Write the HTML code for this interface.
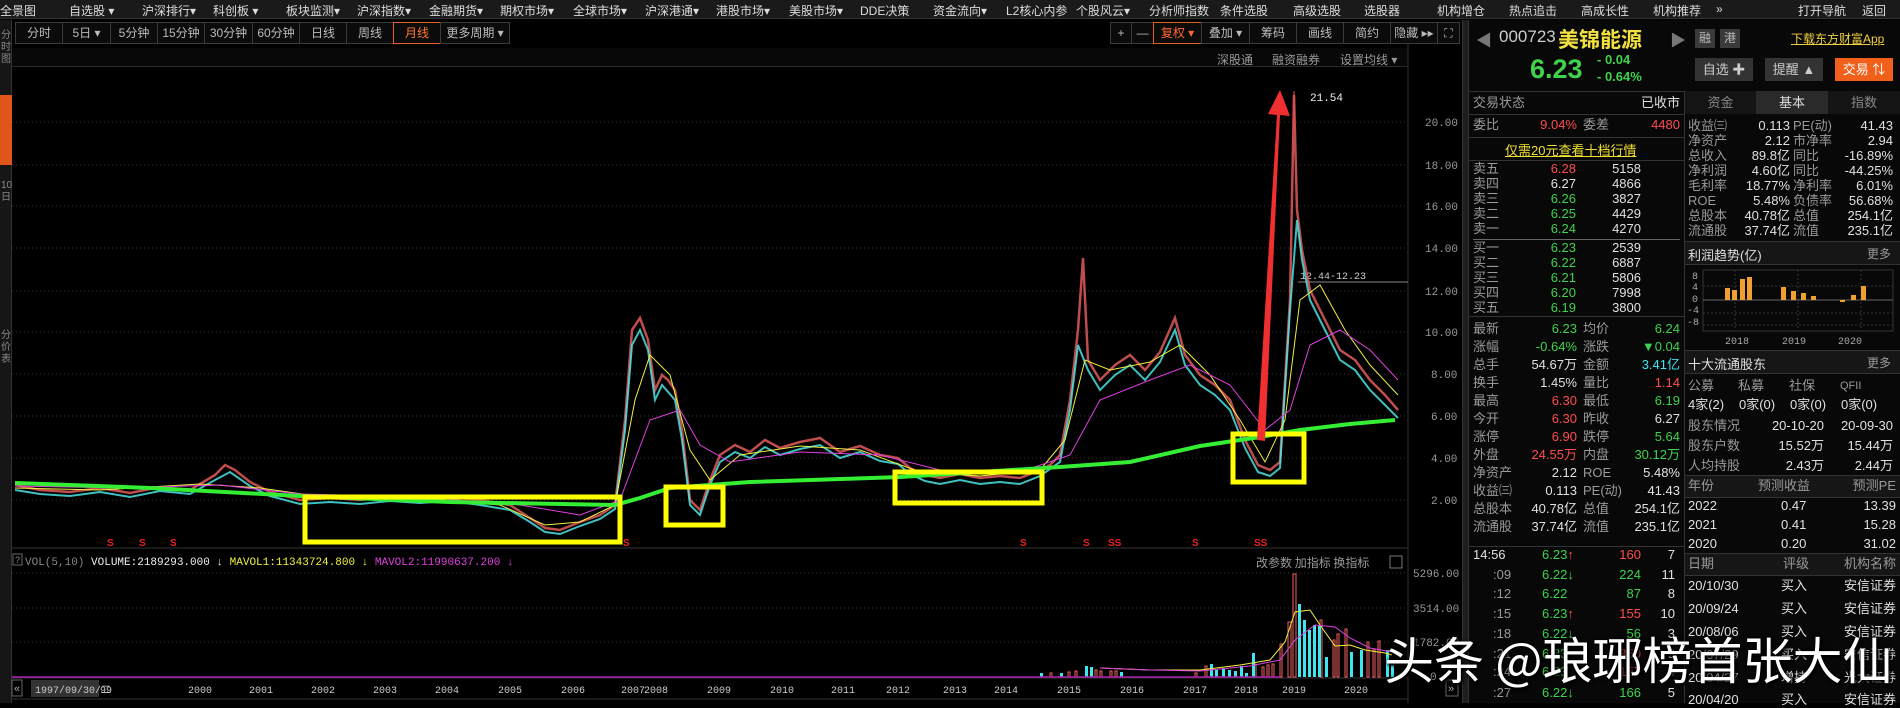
<!DOCTYPE html>
<html><head><meta charset="utf-8">
<style>
*{margin:0;padding:0;box-sizing:border-box}
body{width:1900px;height:703px;background:#000;overflow:hidden;position:relative;font-family:"Liberation Sans","Noto Sans CJK SC",sans-serif;font-size:12px;color:#ccc}
.a{position:absolute;white-space:nowrap}
#nav{left:0;top:0;width:1900px;height:19px;background:#1a1a1a;border-bottom:1px solid #333}
#nav span{position:absolute;top:2px;font-size:12px;color:#ddd}
.tab{position:absolute;top:22px;height:22px;border:1px solid #3a3a3a;background:#0b0b0b;color:#bbb;font-size:12px;line-height:20px;text-align:center}
.row{position:absolute;height:16px;font-size:13px;line-height:16px}
.row span{position:absolute;top:0}
.g{color:#3fd24c}.r{color:#ff4d4d}.w{color:#e0e0e0}.l{color:#9a9a9a}.y{color:#f0e030}.c{color:#3ee6f0}
.hl{position:absolute;height:1px;background:#333}
</style></head><body>
<div id="nav" class="a">
<span style="left:0">全景图</span><span style="left:69px">自选股 ▾</span><span style="left:142px">沪深排行▾</span><span style="left:213px">科创板 ▾</span><span style="left:286px">板块监测▾</span><span style="left:357px">沪深指数▾</span><span style="left:429px">金融期货▾</span><span style="left:500px">期权市场▾</span><span style="left:573px">全球市场▾</span><span style="left:645px">沪深港通▾</span><span style="left:716px">港股市场▾</span><span style="left:789px">美股市场▾</span><span style="left:860px">DDE决策</span><span style="left:933px">资金流向▾</span><span style="left:1006px">L2核心内参</span><span style="left:1076px">个股风云▾</span><span style="left:1149px">分析师指数</span><span style="left:1220px">条件选股</span><span style="left:1293px">高级选股</span><span style="left:1364px">选股器</span><span style="left:1437px">机构增仓</span><span style="left:1509px">热点追击</span><span style="left:1581px">高成长性</span><span style="left:1653px">机构推荐</span><span style="left:1716px">»</span><span style="left:1798px">打开导航</span><span style="left:1862px">返回</span>
</div>
<div class="a" style="left:0;top:20px;width:12px;height:683px;background:#161616;border-right:1px solid #333"></div>
<div class="a" style="left:0;top:95px;width:12px;height:70px;background:#e0561a"></div>
<div class="a" style="left:1px;top:30px;font-size:10px;line-height:12px;color:#888;white-space:normal;width:10px">分时图</div>
<div class="a" style="left:1px;top:180px;font-size:10px;line-height:12px;color:#888;white-space:normal;width:10px">10日</div>
<div class="a" style="left:1px;top:330px;font-size:10px;line-height:12px;color:#888;white-space:normal;width:10px">分价表</div>
<div class="tab" style="left:15px;width:48px">分时</div><div class="tab" style="left:62px;width:49px">5日 ▾</div><div class="tab" style="left:110px;width:48px">5分钟</div><div class="tab" style="left:157px;width:48px">15分钟</div><div class="tab" style="left:204px;width:49px">30分钟</div><div class="tab" style="left:252px;width:48px">60分钟</div><div class="tab" style="left:299px;width:48px">日线</div><div class="tab" style="left:346px;width:48px">周线</div><div class="tab" style="left:393px;width:48px;border-color:#e06020;color:#ff7a30">月线</div><div class="tab" style="left:440px;width:70px">更多周期 ▾</div>
<div class="tab" style="left:1110px;width:22px">+</div><div class="tab" style="left:1131px;width:23px">—</div><div class="tab" style="left:1153px;width:49px;border-color:#e06020;color:#ff6a30">复权 ▾</div><div class="tab" style="left:1201px;width:49px">叠加 ▾</div><div class="tab" style="left:1249px;width:48px">筹码</div><div class="tab" style="left:1296px;width:48px">画线</div><div class="tab" style="left:1343px;width:48px">简约</div><div class="tab" style="left:1390px;width:48px">隐藏 ▸▸</div><div class="tab" style="left:1437px;width:23px">⛶</div>
<div class="a" style="left:12px;top:48px;width:1396px;height:19px;background:#080808;border-bottom:1px solid #2a2a2a"></div>
<div class="a l" style="left:1217px;top:51px;font-size:12px">深股通</div>
<div class="a l" style="left:1272px;top:51px;font-size:12px">融资融券</div>
<div class="a l" style="left:1340px;top:51px;font-size:12px">设置均线 ▾</div>

<svg class="a" style="left:0;top:0" width="1468" height="703" xmlns="http://www.w3.org/2000/svg">
<line x1="1408" y1="44" x2="1408" y2="703" stroke="#333"/>
<g stroke="#333" stroke-dasharray="1,3">
<line x1="12" y1="122" x2="1408" y2="122"/><line x1="12" y1="165" x2="1408" y2="165"/><line x1="12" y1="206" x2="1408" y2="206"/><line x1="12" y1="248" x2="1408" y2="248"/><line x1="12" y1="291" x2="1408" y2="291"/><line x1="12" y1="332" x2="1408" y2="332"/><line x1="12" y1="374" x2="1408" y2="374"/><line x1="12" y1="416" x2="1408" y2="416"/><line x1="12" y1="458" x2="1408" y2="458"/><line x1="12" y1="500" x2="1408" y2="500"/>
<line x1="12" y1="573" x2="1408" y2="573"/><line x1="12" y1="608" x2="1408" y2="608"/><line x1="12" y1="642" x2="1408" y2="642"/>
</g>
<line x1="1298" y1="282" x2="1408" y2="282" stroke="#888"/>
<text x="1300" y="279" fill="#ccc" font-size="10" font-family="Liberation Mono">12.44-12.23</text>
<g fill="#999" font-size="11" font-family="Liberation Mono">
<text x="1425" y="126">20.00</text><text x="1425" y="169">18.00</text><text x="1425" y="210">16.00</text><text x="1425" y="252">14.00</text><text x="1425" y="295">12.00</text><text x="1425" y="336">10.00</text><text x="1431" y="378">8.00</text><text x="1431" y="420">6.00</text><text x="1431" y="462">4.00</text><text x="1431" y="504">2.00</text>
<text x="1413" y="577">5296.00</text><text x="1413" y="612">3514.00</text><text x="1413" y="646">1782.00</text><text x="1430" y="680">0</text>
</g>
<line x1="12" y1="548" x2="1408" y2="548" stroke="#333"/>
<line x1="12" y1="678" x2="1408" y2="678" stroke="#333"/>
<line x1="12" y1="699" x2="1408" y2="699" stroke="#333"/>
<polyline fill="none" stroke="#e05a5a" stroke-width="2.5" opacity="0.85" points="15,485 40,490 70,492 100,488 130,493 160,487 190,490 215,475 225,465 235,470 250,482 270,492 300,500 330,498 360,500 390,497 420,499 450,497 480,500 510,505 530,518 545,528 560,530 580,522 600,515 615,505 625,420 632,330 640,318 648,340 655,390 662,375 668,380 675,390 682,430 690,500 700,510 710,480 720,455 735,445 750,452 765,440 780,448 800,442 820,438 840,452 860,446 880,455 898,458 910,468 925,475 940,478 960,474 980,478 1000,476 1020,478 1040,470 1050,465 1060,455 1070,400 1078,330 1083,258 1088,360 1100,380 1115,365 1130,355 1145,370 1160,352 1175,318 1185,355 1200,375 1215,385 1230,400 1245,440 1258,465 1270,470 1280,462 1290,300 1294,95 1297,210 1302,250 1310,290 1320,310 1330,330 1340,350 1355,360 1370,380 1385,395 1398,410"/>
<polyline fill="none" stroke="#4ff0f0" stroke-width="2" opacity="0.8" points="15,490 40,494 70,496 100,492 130,497 160,491 190,494 215,480 230,472 250,486 270,496 300,504 330,502 360,504 390,501 420,503 450,501 480,505 510,510 530,522 545,532 560,534 580,526 600,519 615,509 625,430 632,345 640,330 648,350 655,400 662,385 675,400 682,440 690,505 700,515 710,485 720,462 735,452 750,458 765,447 780,455 800,449 820,445 840,458 860,452 880,461 898,464 910,474 925,481 940,484 960,480 980,484 1000,482 1020,484 1040,476 1060,462 1070,410 1078,345 1088,370 1100,390 1115,375 1130,365 1145,380 1160,362 1175,330 1185,365 1200,385 1215,395 1230,410 1245,448 1258,472 1270,476 1280,468 1290,310 1297,220 1302,260 1310,300 1320,320 1330,340 1340,360 1355,370 1370,390 1385,405 1398,418"/>
<polyline fill="none" stroke="#f0f040" stroke-width="1" points="15,488 100,490 200,484 260,488 330,498 420,498 500,505 545,525 580,522 615,505 635,400 650,355 670,375 690,450 710,480 740,455 800,446 860,450 920,472 980,476 1040,470 1065,440 1085,360 1110,370 1150,362 1180,345 1210,375 1240,420 1265,462 1285,420 1300,300 1320,285 1345,330 1370,365 1398,395"/>
<polyline fill="none" stroke="#e040e0" stroke-width="1" points="15,486 120,488 220,485 300,494 420,497 520,505 580,515 620,500 650,420 680,410 700,445 730,462 800,452 880,455 940,470 1020,472 1070,455 1100,400 1150,380 1190,365 1230,385 1265,430 1290,410 1310,345 1340,330 1370,350 1398,380"/>
<polyline fill="none" stroke="#33ee33" stroke-width="4" points="15,483 150,488 300,496 450,502 615,505 640,498 670,488 750,482 900,477 1060,467 1130,462 1200,446 1260,437 1300,430 1350,424 1395,420"/>
<g fill="none" stroke="#ffff00" stroke-width="5">
<rect x="305" y="497" width="315" height="45"/><rect x="666" y="487" width="57" height="38"/><rect x="895" y="472" width="147" height="31"/><rect x="1233" y="434" width="71" height="48"/>
</g>
<polygon points="1257,440 1265,441 1280,115 1290,116 1280,90 1268,114 1277,115" fill="#f03030"/>
<line x1="1294" y1="91" x2="1294" y2="130" stroke="#f05050"/>
<text x="1310" y="101" fill="#eee" font-size="11" font-family="Liberation Mono">21.54</text>
<g fill="#ee2020" font-size="10" font-weight="bold">
<text x="107" y="546">S</text><text x="139" y="546">S</text><text x="170" y="546">S</text><text x="623" y="546">S</text><text x="1020" y="546">S</text><text x="1083" y="546">S</text><text x="1108" y="546">SS</text><text x="1192" y="546">S</text><text x="1254" y="546">SS</text>
</g>
<rect x="13" y="554" width="9" height="11" fill="none" stroke="#666"/>
<text x="15" y="563" fill="#888" font-size="9">?</text>
<text x="25" y="565" font-size="11" font-family="Liberation Mono"><tspan fill="#888">VOL(5,10) </tspan><tspan fill="#eee">VOLUME:2189293.000 ↓ </tspan><tspan fill="#f0f040">MAVOL1:11343724.800 ↓ </tspan><tspan fill="#e040e0">MAVOL2:11990637.200 ↓</tspan></text>
<text x="1256" y="567" fill="#999" font-size="12" font-family="Noto Sans CJK SC">改参数  加指标  换指标</text>
<rect x="1390" y="556" width="12" height="12" fill="none" stroke="#777"/>
<g fill="none" stroke="#f06060">
<rect x="1288" y="622" width="3" height="55"/><rect x="1293" y="574" width="3" height="103"/><rect x="1320" y="620" width="2" height="57"/><rect x="1333" y="640" width="2" height="37"/><rect x="1337" y="634" width="2" height="43"/><rect x="1345" y="629" width="2" height="48"/><rect x="1367" y="642" width="2" height="35"/><rect x="1373" y="650" width="2" height="27"/><rect x="1378" y="641" width="2" height="36"/><rect x="1254" y="664" width="2" height="13"/><rect x="1280" y="644" width="2" height="33"/><rect x="1095" y="670" width="2" height="7"/><rect x="1205" y="666" width="2" height="11"/><rect x="1262" y="667" width="2" height="10"/><rect x="1267" y="665" width="2" height="12"/><rect x="1272" y="664" width="2" height="13"/><rect x="1100" y="671" width="2" height="6"/><rect x="1110" y="671" width="2" height="6"/><rect x="1115" y="671" width="2" height="6"/><rect x="1050" y="673" width="2" height="4"/><rect x="1068" y="672" width="2" height="5"/><rect x="1075" y="671" width="2" height="6"/><rect x="1195" y="673" width="2" height="4"/>
</g>
<g fill="#3ee6f0">
<rect x="1298" y="604" width="3" height="73"/><rect x="1303" y="620" width="3" height="57"/><rect x="1308" y="630" width="3" height="47"/><rect x="1313" y="625" width="3" height="52"/><rect x="1318" y="626" width="3" height="51"/><rect x="1325" y="657" width="3" height="20"/><rect x="1350" y="652" width="3" height="25"/><rect x="1360" y="650" width="3" height="27"/><rect x="1386" y="650" width="3" height="27"/><rect x="1391" y="665" width="3" height="12"/><rect x="1252" y="653" width="3" height="24"/><rect x="1240" y="666" width="3" height="11"/><rect x="1210" y="664" width="3" height="13"/><rect x="1085" y="666" width="3" height="11"/><rect x="1090" y="667" width="3" height="10"/><rect x="1215" y="670" width="3" height="7"/><rect x="1222" y="668" width="3" height="9"/><rect x="1228" y="670" width="3" height="7"/><rect x="1234" y="671" width="3" height="6"/><rect x="1245" y="673" width="3" height="4"/><rect x="1120" y="672" width="3" height="5"/><rect x="1040" y="673" width="3" height="4"/><rect x="1060" y="673" width="3" height="4"/>
</g>
<polyline fill="none" stroke="#f0f040" points="1100,668 1150,670 1200,670 1240,665 1270,660 1285,642 1295,612 1310,610 1320,625 1335,646 1350,645 1365,650 1385,653 1392,655"/>
<polyline fill="none" stroke="#e040e0" points="1100,668 1150,670 1200,671 1250,666 1280,660 1295,640 1315,625 1335,627 1350,638 1370,648 1392,652"/>
<line x1="12" y1="677" x2="1280" y2="677" stroke="#b020b0" stroke-width="1.5"/>
<rect x="12" y="680" width="10" height="16" fill="none" stroke="#666"/>
<text x="14" y="692" fill="#aaa" font-size="11">«</text>
<rect x="31" y="680" width="68" height="17" fill="#333"/>
<text x="35" y="693" fill="#ccc" font-size="10" font-family="Liberation Mono">1997/09/30/二</text>
<g fill="#ccc" font-size="10" font-family="Liberation Mono">
<text x="100" y="693">99</text><text x="188" y="693">2000</text><text x="249" y="693">2001</text><text x="311" y="693">2002</text><text x="373" y="693">2003</text><text x="435" y="693">2004</text><text x="498" y="693">2005</text><text x="561" y="693">2006</text><text x="621" y="693">2007</text><text x="644" y="693">2008</text><text x="707" y="693">2009</text><text x="770" y="693">2010</text><text x="831" y="693">2011</text><text x="886" y="693">2012</text><text x="943" y="693">2013</text><text x="994" y="693">2014</text><text x="1057" y="693">2015</text><text x="1120" y="693">2016</text><text x="1183" y="693">2017</text><text x="1234" y="693">2018</text><text x="1282" y="693">2019</text><text x="1344" y="693">2020</text>
</g>
<rect x="1446" y="680" width="12" height="16" fill="none" stroke="#666"/>
<text x="1448" y="692" fill="#aaa" font-size="11">»</text>
</svg>
<div class="a" style="left:1462px;top:20px;width:7px;height:683px;background:#1e1e1e;border-left:1px solid #333;border-right:1px solid #333"></div>

<div class="a" style="left:1469px;top:20px;width:431px;height:683px;background:#080808"></div>
<div class="a" style="left:1476px;top:27px;color:#777;font-size:16px">◀</div>
<div class="a" style="left:1499px;top:27px;color:#ccc;font-size:17px">000723</div>
<div class="a" style="left:1558px;top:24px;color:#f0e040;font-size:21px;font-weight:bold">美锦能源</div>
<div class="a" style="left:1670px;top:27px;color:#777;font-size:16px">▶</div>
<div class="a g" style="left:1530px;top:54px;font-size:27px;font-weight:bold;color:#3fd24c">6.23</div>
<div class="a g" style="left:1597px;top:52px;font-size:13px;font-weight:bold">- 0.04</div>
<div class="a g" style="left:1597px;top:69px;font-size:13px;font-weight:bold">- 0.64%</div>
<div class="a" style="left:1695px;top:29px;width:20px;height:19px;background:#3a3a3a;color:#bbb;font-size:12px;text-align:center;line-height:19px">融</div>
<div class="a" style="left:1720px;top:29px;width:20px;height:19px;background:#3a3a3a;color:#bbb;font-size:12px;text-align:center;line-height:19px">港</div>
<div class="a" style="left:1791px;top:30px;color:#f0d040;font-size:12px;text-decoration:underline">下载东方财富App</div>
<div class="a" style="left:1695px;top:58px;width:58px;height:23px;background:#333;color:#ccc;font-size:13px;text-align:center;line-height:23px">自选 ✚</div>
<div class="a" style="left:1765px;top:58px;width:58px;height:23px;background:#333;color:#ccc;font-size:13px;text-align:center;line-height:23px">提醒 ▲</div>
<div class="a" style="left:1835px;top:58px;width:58px;height:23px;background:#f0601a;color:#fff;font-size:13px;text-align:center;line-height:23px">交易 ⇅</div>
<div class="hl" style="left:1469px;top:91px;width:431px"></div>
<div class="a" style="left:1684px;top:91px;width:1px;height:612px;background:#333"></div>

<div class="row" style="left:1473px;top:95px;width:207px"><span class="l">交易状态</span><span class="w" style="right:0">已收市</span></div>
<div class="hl" style="left:1469px;top:114px;width:215px"></div>
<div class="row" style="left:1473px;top:117px;width:207px"><span class="l">委比</span><span class="r" style="right:103px">9.04%</span><span class="l" style="left:110px">委差</span><span class="r" style="right:0">4480</span></div>
<div class="hl" style="left:1469px;top:137px;width:215px"></div>
<div class="a y" style="left:1505px;top:140px;font-size:13px;text-decoration:underline">仅需20元查看十档行情</div>
<div class="hl" style="left:1469px;top:160px;width:215px"></div>

<div class="row" style="left:1473px;top:161px;width:207px"><span class="l">卖五</span><span class="r" style="right:104px">6.28</span><span class="w" style="right:39px">5158</span></div>
<div class="row" style="left:1473px;top:176px;width:207px"><span class="l">卖四</span><span class="w" style="right:104px">6.27</span><span class="w" style="right:39px">4866</span></div>
<div class="row" style="left:1473px;top:191px;width:207px"><span class="l">卖三</span><span class="g" style="right:104px">6.26</span><span class="w" style="right:39px">3827</span></div>
<div class="row" style="left:1473px;top:206px;width:207px"><span class="l">卖二</span><span class="g" style="right:104px">6.25</span><span class="w" style="right:39px">4429</span></div>
<div class="row" style="left:1473px;top:221px;width:207px"><span class="l">卖一</span><span class="g" style="right:104px">6.24</span><span class="w" style="right:39px">4270</span></div>
<div class="hl" style="left:1473px;top:239px;width:207px;background:#666"></div>
<div class="row" style="left:1473px;top:240px;width:207px"><span class="l">买一</span><span class="g" style="right:104px">6.23</span><span class="w" style="right:39px">2539</span></div>
<div class="row" style="left:1473px;top:255px;width:207px"><span class="l">买二</span><span class="g" style="right:104px">6.22</span><span class="w" style="right:39px">6887</span></div>
<div class="row" style="left:1473px;top:270px;width:207px"><span class="l">买三</span><span class="g" style="right:104px">6.21</span><span class="w" style="right:39px">5806</span></div>
<div class="row" style="left:1473px;top:285px;width:207px"><span class="l">买四</span><span class="g" style="right:104px">6.20</span><span class="w" style="right:39px">7998</span></div>
<div class="row" style="left:1473px;top:300px;width:207px"><span class="l">买五</span><span class="g" style="right:104px">6.19</span><span class="w" style="right:39px">3800</span></div>
<div class="hl" style="left:1469px;top:316px;width:215px"></div>

<div class="row" style="left:1473px;top:321px;width:207px"><span class="l">最新</span><span class="g" style="right:103px">6.23</span><span class="l" style="left:110px">均价</span><span class="g" style="right:0">6.24</span></div>
<div class="row" style="left:1473px;top:339px;width:207px"><span class="l">涨幅</span><span class="g" style="right:103px">-0.64%</span><span class="l" style="left:110px">涨跌</span><span class="g" style="right:0">▼0.04</span></div>
<div class="row" style="left:1473px;top:357px;width:207px"><span class="l">总手</span><span class="w" style="right:103px">54.67万</span><span class="l" style="left:110px">金额</span><span class="c" style="right:0">3.41亿</span></div>
<div class="row" style="left:1473px;top:375px;width:207px"><span class="l">换手</span><span class="w" style="right:103px">1.45%</span><span class="l" style="left:110px">量比</span><span class="r" style="right:0">1.14</span></div>
<div class="row" style="left:1473px;top:393px;width:207px"><span class="l">最高</span><span class="r" style="right:103px">6.30</span><span class="l" style="left:110px">最低</span><span class="g" style="right:0">6.19</span></div>
<div class="row" style="left:1473px;top:411px;width:207px"><span class="l">今开</span><span class="r" style="right:103px">6.30</span><span class="l" style="left:110px">昨收</span><span class="w" style="right:0">6.27</span></div>
<div class="row" style="left:1473px;top:429px;width:207px"><span class="l">涨停</span><span class="r" style="right:103px">6.90</span><span class="l" style="left:110px">跌停</span><span class="g" style="right:0">5.64</span></div>
<div class="row" style="left:1473px;top:447px;width:207px"><span class="l">外盘</span><span class="r" style="right:103px">24.55万</span><span class="l" style="left:110px">内盘</span><span class="g" style="right:0">30.12万</span></div>
<div class="row" style="left:1473px;top:465px;width:207px"><span class="l">净资产</span><span class="w" style="right:103px">2.12</span><span class="l" style="left:110px">ROE</span><span class="w" style="right:0">5.48%</span></div>
<div class="row" style="left:1473px;top:483px;width:207px"><span class="l">收益㈢</span><span class="w" style="right:103px">0.113</span><span class="l" style="left:110px">PE(动)</span><span class="w" style="right:0">41.43</span></div>
<div class="row" style="left:1473px;top:501px;width:207px"><span class="l">总股本</span><span class="w" style="right:103px">40.78亿</span><span class="l" style="left:110px">总值</span><span class="w" style="right:0">254.1亿</span></div>
<div class="row" style="left:1473px;top:519px;width:207px"><span class="l">流通股</span><span class="w" style="right:103px">37.74亿</span><span class="l" style="left:110px">流值</span><span class="w" style="right:0">235.1亿</span></div>
<div class="hl" style="left:1469px;top:546px;width:215px"></div>

<div class="row" style="left:1473px;top:547px;width:207px"><span class="w">14:56</span><span class="g" style="left:69px">6.23<b class="r">↑</b></span><span class="r" style="right:39px">160</span><span class="w" style="right:5px">7</span></div>
<div class="row" style="left:1473px;top:567px;width:207px"><span class="l" style="left:20px">:09</span><span class="g" style="left:69px">6.22<b>↓</b></span><span class="g" style="right:39px">224</span><span class="w" style="right:5px">11</span></div>
<div class="row" style="left:1473px;top:586px;width:207px"><span class="l" style="left:20px">:12</span><span class="g" style="left:69px">6.22</span><span class="g" style="right:39px">87</span><span class="w" style="right:5px">8</span></div>
<div class="row" style="left:1473px;top:606px;width:207px"><span class="l" style="left:20px">:15</span><span class="g" style="left:69px">6.23<b class="r">↑</b></span><span class="r" style="right:39px">155</span><span class="w" style="right:5px">10</span></div>
<div class="row" style="left:1473px;top:626px;width:207px"><span class="l" style="left:20px">:18</span><span class="g" style="left:69px">6.22↓</span><span class="g" style="right:39px">56</span><span class="w" style="right:5px">3</span></div>
<div class="row" style="left:1473px;top:646px;width:207px"><span class="l" style="left:20px">:21</span><span class="g" style="left:69px">6.23</span><span class="r" style="right:39px">350</span><span class="w" style="right:5px">9</span></div>
<div class="row" style="left:1473px;top:664px;width:207px"><span class="l" style="left:20px">:24</span><span class="g" style="left:69px">6.23</span><span class="r" style="right:39px">157</span><span class="w" style="right:5px">4</span></div>
<div class="row" style="left:1473px;top:685px;width:207px"><span class="l" style="left:20px">:27</span><span class="g" style="left:69px">6.22<b>↓</b></span><span class="g" style="right:39px">166</span><span class="w" style="right:5px">5</span></div>

<div class="a" style="left:1685px;top:91px;width:71px;height:23px;background:#141414;color:#888;font-size:13px;text-align:center;line-height:23px">资金</div>
<div class="a" style="left:1756px;top:91px;width:72px;height:23px;background:#2a2a2a;color:#ddd;font-size:13px;text-align:center;line-height:23px">基本</div>
<div class="a" style="left:1828px;top:91px;width:72px;height:23px;background:#141414;color:#888;font-size:13px;text-align:center;line-height:23px">指数</div>
<div class="row" style="left:1688px;top:118px;width:205px"><span class="l">收益㈢</span><span class="w" style="right:103px">0.113</span><span class="l" style="left:105px">PE(动)</span><span class="w" style="right:0">41.43</span></div>
<div class="row" style="left:1688px;top:133px;width:205px"><span class="l">净资产</span><span class="w" style="right:103px">2.12</span><span class="l" style="left:105px">市净率</span><span class="w" style="right:0">2.94</span></div>
<div class="row" style="left:1688px;top:148px;width:205px"><span class="l">总收入</span><span class="w" style="right:103px">89.8亿</span><span class="l" style="left:105px">同比</span><span class="w" style="right:0">-16.89%</span></div>
<div class="row" style="left:1688px;top:163px;width:205px"><span class="l">净利润</span><span class="w" style="right:103px">4.60亿</span><span class="l" style="left:105px">同比</span><span class="w" style="right:0">-44.25%</span></div>
<div class="row" style="left:1688px;top:178px;width:205px"><span class="l">毛利率</span><span class="w" style="right:103px">18.77%</span><span class="l" style="left:105px">净利率</span><span class="w" style="right:0">6.01%</span></div>
<div class="row" style="left:1688px;top:193px;width:205px"><span class="l">ROE</span><span class="w" style="right:103px">5.48%</span><span class="l" style="left:105px">负债率</span><span class="w" style="right:0">56.68%</span></div>
<div class="row" style="left:1688px;top:208px;width:205px"><span class="l">总股本</span><span class="w" style="right:103px">40.78亿</span><span class="l" style="left:105px">总值</span><span class="w" style="right:0">254.1亿</span></div>
<div class="row" style="left:1688px;top:223px;width:205px"><span class="l">流通股</span><span class="w" style="right:103px">37.74亿</span><span class="l" style="left:105px">流值</span><span class="w" style="right:0">235.1亿</span></div>
<div class="a" style="left:1685px;top:241px;width:215px;height:24px;background:#161616;border-top:1px solid #333;border-bottom:1px solid #333"></div>
<div class="a w" style="left:1688px;top:245px;font-size:13px">利润趋势(亿)</div>
<div class="a l" style="left:1867px;top:245px;font-size:12px">更多</div>
<svg class="a" style="left:1685px;top:266px" width="215" height="84">
<rect x="18" y="4" width="190" height="61" fill="none" stroke="#333"/>
<g stroke="#333" stroke-dasharray="2,2"><line x1="18" y1="20" x2="208" y2="20"/><line x1="18" y1="47" x2="208" y2="47"/><line x1="18" y1="59" x2="208" y2="59"/><line x1="50" y1="4" x2="50" y2="65"/><line x1="113" y1="4" x2="113" y2="65"/><line x1="176" y1="4" x2="176" y2="65"/></g>
<line x1="18" y1="34" x2="208" y2="34" stroke="#666"/>
<g fill="#aaa" font-size="10" font-family="Liberation Mono"><text x="7" y="13">8</text><text x="7" y="24">4</text><text x="7" y="36">0</text><text x="2" y="47">-4</text><text x="2" y="59">-8</text><text x="40" y="78">2018</text><text x="97" y="78">2019</text><text x="153" y="78">2020</text></g>
<g fill="#f0a030"><rect x="40" y="22" width="5" height="12"/><rect x="47" y="24" width="5" height="10"/><rect x="55" y="13" width="5" height="21"/><rect x="62" y="11" width="5" height="23"/><rect x="96" y="21" width="5" height="13"/><rect x="106" y="25" width="5" height="9"/><rect x="116" y="27" width="5" height="7"/><rect x="126" y="30" width="5" height="4"/><rect x="155" y="34" width="5" height="2"/><rect x="166" y="29" width="5" height="5"/><rect x="176" y="20" width="5" height="14"/></g>
</svg>
<div class="a" style="left:1685px;top:350px;width:215px;height:24px;background:#161616;border-top:1px solid #333;border-bottom:1px solid #333"></div>
<div class="a w" style="left:1688px;top:354px;font-size:13px">十大流通股东</div>
<div class="a l" style="left:1867px;top:354px;font-size:12px">更多</div>
<div class="row" style="left:1688px;top:378px;width:205px"><span class="l">公募</span><span class="l" style="left:50px">私募</span><span class="l" style="left:101px">社保</span><span class="l" style="left:152px;font-size:11px">QFII</span></div>
<div class="row" style="left:1688px;top:397px;width:205px"><span class="w">4家(2)</span><span class="w" style="left:51px">0家(0)</span><span class="w" style="left:102px">0家(0)</span><span class="w" style="left:153px">0家(0)</span></div>
<div class="row" style="left:1688px;top:418px;width:205px"><span class="l">股东情况</span><span class="w" style="right:69px">20-10-20</span><span class="w" style="right:0">20-09-30</span></div>
<div class="row" style="left:1688px;top:438px;width:205px"><span class="l">股东户数</span><span class="w" style="right:69px">15.52万</span><span class="w" style="right:0">15.44万</span></div>
<div class="row" style="left:1688px;top:458px;width:205px"><span class="l">人均持股</span><span class="w" style="right:69px">2.43万</span><span class="w" style="right:0">2.44万</span></div>
<div class="a" style="left:1685px;top:475px;width:215px;height:23px;background:#161616;border-top:1px solid #333;border-bottom:1px solid #333"></div>
<div class="row" style="left:1688px;top:478px;width:208px"><span class="l">年份</span><span class="l" style="left:70px">预测收益</span><span class="l" style="right:0">预测PE</span></div>
<div class="row" style="left:1688px;top:498px;width:208px"><span class="w">2022</span><span class="w" style="left:93px">0.47</span><span class="w" style="right:0">13.39</span></div>
<div class="row" style="left:1688px;top:517px;width:208px"><span class="w">2021</span><span class="w" style="left:93px">0.41</span><span class="w" style="right:0">15.28</span></div>
<div class="row" style="left:1688px;top:536px;width:208px"><span class="w">2020</span><span class="w" style="left:93px">0.20</span><span class="w" style="right:0">31.02</span></div>
<div class="a" style="left:1685px;top:553px;width:215px;height:23px;background:#161616;border-top:1px solid #333;border-bottom:1px solid #333"></div>
<div class="row" style="left:1688px;top:556px;width:208px"><span class="l">日期</span><span class="l" style="left:95px">评级</span><span class="l" style="right:0">机构名称</span></div>
<div class="row" style="left:1688px;top:578px;width:208px"><span class="w">20/10/30</span><span class="w" style="left:93px">买入</span><span class="w" style="right:0">安信证券</span></div>
<div class="row" style="left:1688px;top:601px;width:208px"><span class="w">20/09/24</span><span class="w" style="left:93px">买入</span><span class="w" style="right:0">安信证券</span></div>
<div class="row" style="left:1688px;top:624px;width:208px"><span class="w">20/08/06</span><span class="w" style="left:93px">买入</span><span class="w" style="right:0">安信证券</span></div>
<div class="row" style="left:1688px;top:647px;width:208px"><span class="w">20/07/29</span><span class="w" style="left:93px">买入</span><span class="w" style="right:0">安信证券</span></div>
<div class="row" style="left:1688px;top:670px;width:208px"><span class="w">20/04/27</span><span class="w" style="left:93px">增持</span><span class="w" style="right:0">光大证券</span></div>
<div class="row" style="left:1688px;top:692px;width:208px"><span class="w">20/04/20</span><span class="w" style="left:93px">买入</span><span class="w" style="right:0">安信证券</span></div>

<div class="a" style="left:1384px;top:628px;font-size:50px;line-height:60px;color:#fff;font-family:'Noto Sans CJK SC',sans-serif;text-shadow:0 0 4px #000,2px 2px 3px #000">头条 @琅琊榜首张大仙</div>
</body></html>
